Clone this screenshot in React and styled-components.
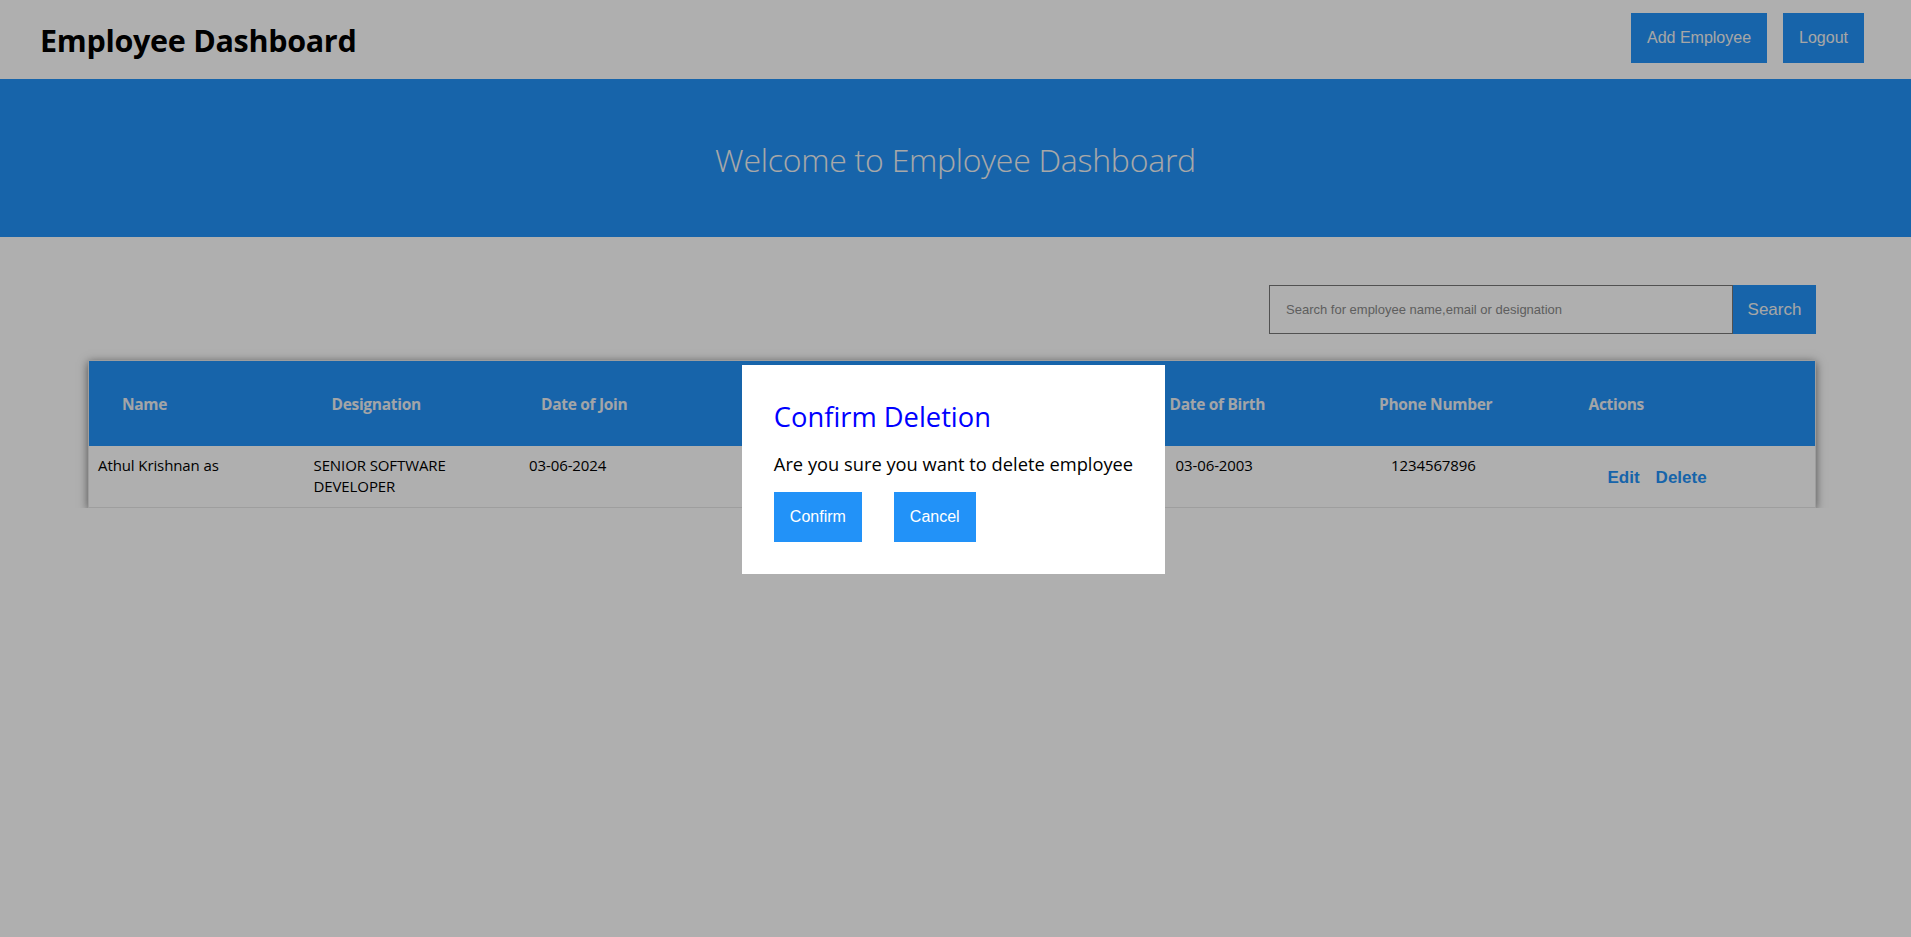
import React from 'react'
import styled, { createGlobalStyle } from 'styled-components'

const GlobalStyle = createGlobalStyle`
  body {
    margin: 0;
    background: #ffffff;
    font-family: "Open Sans", "Noto Sans", sans-serif;
  }
  * { box-sizing: border-box; }
`

const blue = '#2292f8'

// the two middle columns sit behind the dialog
const employees = [
  {
    id: 1,
    name: 'Athul Krishnan as',
    designation: 'SENIOR SOFTWARE DEVELOPER',
    doj: '03-06-2024',
    dob: '03-06-2003',
    phone: '1234567896',
  },
]

const columns = ['Name', 'Designation', 'Date of Join', '', '', 'Date of Birth', 'Phone Number', 'Actions']

export default function App() {
  return (
    <>
      <GlobalStyle />
      <Navbar>
        <Brand>Employee Dashboard</Brand>
        <NavActions>
          <NavButton>Add Employee</NavButton>
          <NavButton>Logout</NavButton>
        </NavActions>
      </Navbar>
      <Hero>
        <HeroTitle>Welcome to Employee Dashboard</HeroTitle>
      </Hero>
      <Main>
        <SearchBar>
          <SearchInput placeholder="Search for employee name,email or designation" />
          <SearchButton>Search</SearchButton>
        </SearchBar>
        <Table>
          <HeaderRow>
            {columns.map((c, i) => (
              <HeadCell key={i}>{c}</HeadCell>
            ))}
          </HeaderRow>
          {employees.map(e => (
            <BodyRow key={e.id}>
              <Cell>{e.name}</Cell>
              <Cell>{e.designation}</Cell>
              <Cell>{e.doj}</Cell>
              <Cell />
              <Cell />
              <Cell>{e.dob}</Cell>
              <Cell>{e.phone}</Cell>
              <ActionCell>
                <LinkButton>Edit</LinkButton>
                <LinkButton>Delete</LinkButton>
              </ActionCell>
            </BodyRow>
          ))}
        </Table>
      </Main>
      <Overlay>
        <Modal>
          <ModalTitle>Confirm Deletion</ModalTitle>
          <ModalText>Are you sure you want to delete employee</ModalText>
          <ModalActions>
            <ModalButton>Confirm</ModalButton>
            <ModalButton>Cancel</ModalButton>
          </ModalActions>
        </Modal>
      </Overlay>
    </>
  )
}

const Navbar = styled.nav`
  height: 79px;
  display: flex;
  align-items: center;
  justify-content: space-between;
  padding: 0 47px 0 40px;
`
const Brand = styled.h1`
  margin: 0;
  font-size: 30.5px;
  font-weight: 700;
  color: #000;
  letter-spacing: -0.3px;
`
const NavActions = styled.div`
  display: flex;
  gap: 16px;
  margin-top: -4px;
`
const NavButton = styled.button`
  height: 50px;
  padding: 0 16px;
  border: none;
  background: ${blue};
  color: #f2f2f2;
  font-family: "Liberation Sans", Arial, sans-serif;
  font-size: 16px;
`
const Hero = styled.header`
  height: 158px;
  background: ${blue};
  display: flex;
  align-items: center;
  justify-content: center;
`
const HeroTitle = styled.h2`
  margin: 2px 0 0;
  font-size: 32px;
  font-weight: 300;
  color: #f5f5f5;
  letter-spacing: -0.25px;
`
const Main = styled.main`
  padding: 48px 95px 0 88px;
`
const SearchBar = styled.div`
  display: flex;
  justify-content: flex-end;
`
const SearchInput = styled.input`
  width: 464px;
  height: 49px;
  padding: 0 16px;
  border: 1px solid #777;
  background: #fff;
  font-family: "Liberation Sans", Arial, sans-serif;
  font-size: 13px;
  &::placeholder { color: #8a8a8a; }
`
const SearchButton = styled.button`
  width: 83px;
  height: 49px;
  border: none;
  background: ${blue};
  color: #f2f2f2;
  font-family: "Liberation Sans", Arial, sans-serif;
  font-size: 17px;
`
const Table = styled.div`
  margin-top: 26px;
  border: 1px solid #e6e6e6;
  box-shadow: 0 2px 9px rgba(0, 0, 0, 0.55);
`
const HeaderRow = styled.div`
  height: 85px;
  background: ${blue};
  display: grid;
  grid-template-columns: repeat(8, 209.5px);
  align-items: center;
  padding-left: 33px;
`
const HeadCell = styled.div`
  font-size: 15.5px;
  font-weight: 700;
  color: #eef0f4;
  letter-spacing: -0.3px;
`
const BodyRow = styled.div`
  display: grid;
  grid-template-columns: repeat(8, 215.5px);
  padding: 9px 0 10px 9px;
  min-height: 61px;
`
const Cell = styled.div`
  font-size: 15px;
  line-height: 21px;
  color: #000;
  padding-right: 60px;
  letter-spacing: -0.1px;
`
const ActionCell = styled.div`
  display: flex;
  gap: 16px;
  padding-top: 4px;
  padding-left: 1px;
`
const LinkButton = styled.button`
  padding: 0;
  border: none;
  background: none;
  color: ${blue};
  font-family: "Liberation Sans", Arial, sans-serif;
  font-size: 17px;
  font-weight: 700;
`
const Overlay = styled.div`
  position: fixed;
  inset: 0;
  background: rgba(0, 0, 0, 0.314);
  display: flex;
  align-items: center;
  justify-content: center;
`
const Modal = styled.div`
  background: #fff;
  padding: 33px 32px 32px;
  margin-left: -4px;
  margin-top: 2px;
`
const ModalTitle = styled.h3`
  margin: 0;
  font-size: 27.3px;
  font-weight: 400;
  color: #0000ff;
  line-height: 38px;
`
const ModalText = styled.p`
  margin: 16px 0 16px;
  font-size: 18.3px;
  color: #000;
  line-height: 24px;
`
const ModalActions = styled.div`
  display: flex;
  gap: 32px;
`
const ModalButton = styled.button`
  height: 50px;
  padding: 0 16px;
  border: none;
  background: ${blue};
  color: #fff;
  font-family: "Liberation Sans", Arial, sans-serif;
  font-size: 16px;
`
